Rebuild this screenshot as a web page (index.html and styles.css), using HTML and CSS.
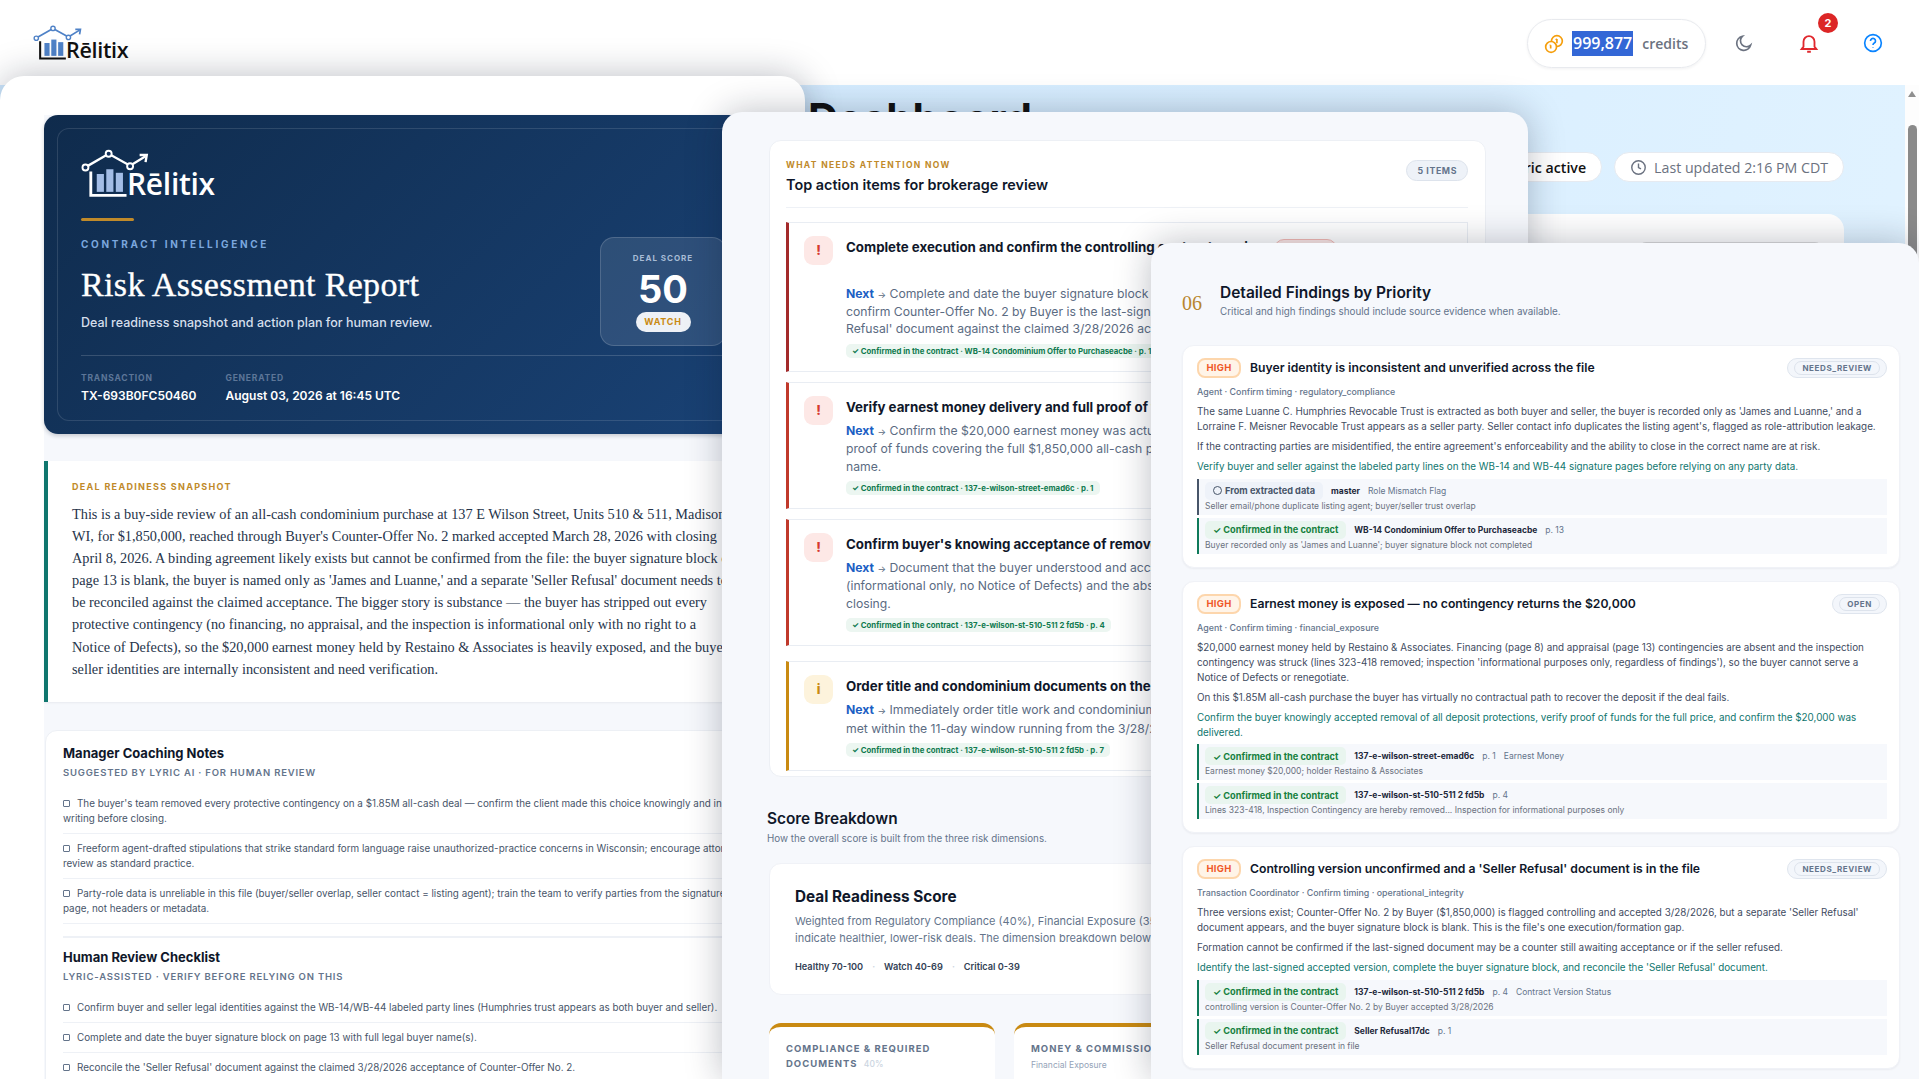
FILE: index.html
```html
<!DOCTYPE html>
<html lang="en">
<head>
<meta charset="utf-8">
<title>Relitix Dashboard</title>
<link rel="stylesheet" href="styles.css">
</head>
<body>
<div class="app">
  <header class="topbar">
    <div class="brand">
      <svg class="brand-mark" viewBox="0 0 60 42" aria-hidden="true">
        <path class="roof" d="M4 15 L23 4 L41 14 L54 6"/>
        <path class="roof" d="M49 5 L55 5 L54 11"/>
        <circle class="node" cx="3.5" cy="15.5" r="2.5"/>
        <circle class="node" cx="23" cy="4" r="2.5"/>
        <circle class="node" cx="41" cy="14.5" r="2.5"/>
        <rect class="bar" x="13" y="21" width="6" height="15"/>
        <rect class="bar" x="21" y="17" width="6" height="19"/>
        <rect class="bar" x="29" y="20" width="6" height="16"/>
        <path class="base" d="M8 19 V39 H38"/>
      </svg>
      <span class="brand-name">Rēlitix</span>
    </div>
    <div class="top-actions">
      <div class="credits">
        <svg class="icon-coins" viewBox="0 0 24 24" aria-hidden="true">
          <circle cx="15.5" cy="8.5" r="6.5"/><circle cx="8.5" cy="15.5" r="6.5"/>
          <path d="M15.5 6v5M14 7l1.5-1M8 13.5v4M7 14l1-.8"/>
        </svg>
        <span class="credits-num">999,877</span>
        <span class="credits-label">credits</span>
      </div>
      <svg class="icon-moon" viewBox="0 0 24 24" aria-hidden="true"><path d="M20 14.5A8.5 8.5 0 1 1 10 4a7 7 0 0 0 10 10.500z"/></svg>
      <div class="bell-wrap">
        <svg class="icon-bell" viewBox="0 0 24 24" aria-hidden="true"><path d="M6 16V10.500a6 6 0 0 1 12 0V16l2 2.500H4zM10 21.500h4"/></svg>
        <span class="bell-badge">2</span>
      </div>
      <svg class="icon-help" viewBox="0 0 24 24" aria-hidden="true"><circle cx="12" cy="12" r="10"/><path d="M9 9.500a3 3 0 1 1 4.500 2.600c-1 .6-1.500 1.200-1.500 2.400M12 17.500v.5"/></svg>
    </div>
  </header>
  <div class="workspace">
    <main class="dash">
      <h1 class="dash-title">Dashboard</h1>
      <div class="dash-pills">
        <span class="dash-pill dash-pill-strong">1 metric active</span>
        <span class="dash-pill">
          <svg class="icon-clock" viewBox="0 0 24 24" aria-hidden="true"><circle cx="12" cy="12" r="9.500"/><path d="M12 6.500V12l3.500 2"/></svg>
          Last updated 2:16 PM CDT
        </span>
      </div>
      <section class="dash-card"><div class="dash-card-inner"></div></section>
    </main>
    <div class="scrollbar"><span class="scroll-arrow"></span><span class="scroll-thumb"></span></div>
  </div>
</div>

<section class="window window-report">
  <div class="report">
    <div class="hero">
      <div class="hero-frame">
        <div class="hero-top">
          <div class="hero-main">
            <div class="brand brand-hero">
              <svg class="brand-mark" viewBox="0 0 60 42" aria-hidden="true">
                <path class="roof" d="M4 15 L23 4 L41 14 L54 6"/>
                <path class="roof" d="M49 5 L55 5 L54 11"/>
                <circle class="node" cx="3.5" cy="15.5" r="2.5"/>
                <circle class="node" cx="23" cy="4" r="2.5"/>
                <circle class="node" cx="41" cy="14.5" r="2.5"/>
                <rect class="bar" x="13" y="21" width="6" height="15"/>
                <rect class="bar" x="21" y="17" width="6" height="19"/>
                <rect class="bar" x="29" y="20" width="6" height="16"/>
                <path class="base" d="M8 19 V39 H38"/>
              </svg>
              <span class="brand-name">Rēlitix</span>
            </div>
            <div class="hero-rule"></div>
            <div class="hero-eyebrow">CONTRACT INTELLIGENCE</div>
            <h2 class="hero-title">Risk Assessment Report</h2>
            <p class="hero-sub">Deal readiness snapshot and action plan for human review.</p>
          </div>
          <div class="score-box">
            <div class="score-label">DEAL SCORE</div>
            <div class="score-num">50</div>
            <div class="score-pill">WATCH</div>
          </div>
        </div>
        <div class="hero-meta">
          <div><div class="meta-label">TRANSACTION</div><div class="meta-value">TX-693B0FC50460</div></div>
          <div><div class="meta-label">GENERATED</div><div class="meta-value">August 03, 2026 at 16:45 UTC</div></div>
        </div>
      </div>
    </div>

    <section class="snapshot">
      <div class="snapshot-label">DEAL READINESS SNAPSHOT</div>
      <p class="snapshot-text">This is a buy-side review of an all-cash condominium purchase at 137 E Wilson Street, Units 510 &amp; 511, Madison,<br>WI, for $1,850,000, reached through Buyer's Counter-Offer No. 2 marked accepted March 28, 2026 with closing<br>April 8, 2026. A binding agreement likely exists but cannot be confirmed from the file: the buyer signature block on<br>page 13 is blank, the buyer is named only as 'James and Luanne,' and a separate 'Seller Refusal' document needs to<br>be reconciled against the claimed acceptance. The bigger story is substance — the buyer has stripped out every<br>protective contingency (no financing, no appraisal, and the inspection is informational only with no right to a<br>Notice of Defects), so the $20,000 earnest money held by Restaino &amp; Associates is heavily exposed, and the buyer and<br>seller identities are internally inconsistent and need verification.</p>
    </section>

    <section class="notes">
      <h3 class="notes-title">Manager Coaching Notes</h3>
      <div class="notes-sub">SUGGESTED BY LYRIC AI · FOR HUMAN REVIEW</div>
      <ul class="notes-list">
        <li class="note"><span class="check"></span>The buyer's team removed every protective contingency on a $1.85M all-cash deal — confirm the client made this choice knowingly and in<br>writing before closing.</li>
        <li class="note"><span class="check"></span>Freeform agent-drafted stipulations that strike standard form language raise unauthorized-practice concerns in Wisconsin; encourage attorney<br>review as standard practice.</li>
        <li class="note"><span class="check"></span>Party-role data is unreliable in this file (buyer/seller overlap, seller contact = listing agent); train the team to verify parties from the signature<br>page, not headers or metadata.</li>
      </ul>
      <div class="notes-split">
        <h3 class="notes-title">Human Review Checklist</h3>
        <div class="notes-sub">LYRIC-ASSISTED · VERIFY BEFORE RELYING ON THIS</div>
        <ul class="notes-list">
          <li class="note"><span class="check"></span>Confirm buyer and seller legal identities against the WB-14/WB-44 labeled party lines (Humphries trust appears as both buyer and seller).</li>
          <li class="note"><span class="check"></span>Complete and date the buyer signature block on page 13 with full legal buyer name(s).</li>
          <li class="note"><span class="check"></span>Reconcile the 'Seller Refusal' document against the claimed 3/28/2026 acceptance of Counter-Offer No. 2.</li>
        </ul>
      </div>
    </section>
  </div>
</section>

<section class="window window-actions">
  <div class="actions-card">
    <div class="actions-head">
      <div>
        <div class="actions-eyebrow">WHAT NEEDS ATTENTION NOW</div>
        <h3 class="actions-title">Top action items for brokerage review</h3>
      </div>
      <span class="items-badge">5 ITEMS</span>
    </div>
    <div class="action-list">
      <article class="action action-dark">
        <span class="action-icon">!</span>
        <div class="action-body">
          <h4 class="action-title action-title-tall">Complete execution and confirm the controlling contract version <span class="crit">CRITICAL</span></h4>
          <p class="action-text"><b class="next">Next</b> <span class="arrow">→</span> Complete and date the buyer signature block on page 13 with full names and<br>confirm Counter-Offer No. 2 by Buyer is the last-signed and accepted version; reconcile the 'Seller<br>Refusal' document against the claimed 3/28/2026 acceptance.</p>
          <span class="source">✓ Confirmed in the contract · WB-14 Condominium Offer to Purchaseacbe · p. 13</span>
        </div>
      </article>
      <article class="action action-red">
        <span class="action-icon">!</span>
        <div class="action-body">
          <h4 class="action-title">Verify earnest money delivery and full proof of funds</h4>
          <p class="action-text"><b class="next">Next</b> <span class="arrow">→</span> Confirm the $20,000 earnest money was actually delivered and obtain<br>proof of funds covering the full $1,850,000 all-cash price in the correct buyer<br>name.</p>
          <span class="source">✓ Confirmed in the contract · 137-e-wilson-street-emad6c · p. 1</span>
        </div>
      </article>
      <article class="action action-red">
        <span class="action-icon">!</span>
        <div class="action-body">
          <h4 class="action-title">Confirm buyer's knowing acceptance of removed contingencies</h4>
          <p class="action-text"><b class="next">Next</b> <span class="arrow">→</span> Document that the buyer understood and accepted the inspection terms<br>(informational only, no Notice of Defects) and the absence of contingencies before<br>closing.</p>
          <span class="source">✓ Confirmed in the contract · 137-e-wilson-st-510-511 2 fd5b · p. 4</span>
        </div>
      </article>
      <article class="action action-amber">
        <span class="action-icon">i</span>
        <div class="action-body">
          <h4 class="action-title">Order title and condominium documents on the timeline</h4>
          <p class="action-text"><b class="next">Next</b> <span class="arrow">→</span> Immediately order title work and condominium documents so deadlines are<br>met within the 11-day window running from the 3/28/2026 acceptance.</p>
          <span class="source">✓ Confirmed in the contract · 137-e-wilson-st-510-511 2 fd5b · p. 7</span>
        </div>
      </article>
    </div>
  </div>

  <h3 class="breakdown-title">Score Breakdown</h3>
  <p class="breakdown-sub">How the overall score is built from the three risk dimensions.</p>
  <div class="readiness">
    <h4 class="readiness-title">Deal Readiness Score</h4>
    <p class="readiness-text">Weighted from Regulatory Compliance (40%), Financial Exposure (35%) and Operational Integrity. Higher scores<br>indicate healthier, lower-risk deals. The dimension breakdown below shows the detail.</p>
    <div class="legend"><span>Healthy 70-100</span><i>·</i><span>Watch 40-69</span><i>·</i><span>Critical 0-39</span></div>
  </div>
  <div class="dimensions">
    <div class="dimension"><div class="dimension-name">COMPLIANCE &amp; REQUIRED DOCUMENTS <small>40%</small></div></div>
    <div class="dimension"><div class="dimension-name">MONEY &amp; COMMISSIONS</div><div class="dimension-sub">Financial Exposure</div></div>
    <div class="dimension"><div class="dimension-name">OPERATIONS</div></div>
  </div>
</section>

<section class="window window-findings">
  <div class="findings-head">
    <span class="findings-num">06</span>
    <div>
      <h3 class="findings-title">Detailed Findings by Priority</h3>
      <p class="findings-sub">Critical and high findings should include source evidence when available.</p>
    </div>
  </div>
  <div class="finding-list">
    <article class="finding">
      <div class="finding-head"><span class="high">HIGH</span><h4 class="finding-title">Buyer identity is inconsistent and unverified across the file</h4><span class="status"><span class="status-in">NEEDS_REVIEW</span></span></div>
      <div class="finding-meta">Agent · Confirm timing · regulatory_compliance</div>
      <p class="finding-text">The same Luanne C. Humphries Revocable Trust is extracted as both buyer and seller, the buyer is recorded only as 'James and Luanne,' and a<br>Lorraine F. Meisner Revocable Trust appears as a seller party. Seller contact info duplicates the listing agent's, flagged as role-attribution leakage.</p>
      <p class="finding-text">If the contracting parties are misidentified, the entire agreement's enforceability and the ability to close in the correct name are at risk.</p>
      <p class="finding-text finding-fix">Verify buyer and seller against the labeled party lines on the WB-14 and WB-44 signature pages before relying on any party data.</p>
      <div class="evidence evidence-data">
        <div class="ev-row"><span class="chip chip-data"><span class="ring"></span>From extracted data</span><b class="ev-doc">master</b><span class="ev-note">Role Mismatch Flag</span></div>
        <div class="ev-sub">Seller email/phone duplicate listing agent; buyer/seller trust overlap</div>
      </div>
      <div class="evidence">
        <div class="ev-row"><span class="chip">✓ Confirmed in the contract</span><b class="ev-doc">WB-14 Condominium Offer to Purchaseacbe</b><span class="ev-note">p. 13</span></div>
        <div class="ev-sub">Buyer recorded only as 'James and Luanne'; buyer signature block not completed</div>
      </div>
    </article>
    <article class="finding">
      <div class="finding-head"><span class="high">HIGH</span><h4 class="finding-title">Earnest money is exposed — no contingency returns the $20,000</h4><span class="status"><span class="status-in">OPEN</span></span></div>
      <div class="finding-meta">Agent · Confirm timing · financial_exposure</div>
      <p class="finding-text">$20,000 earnest money held by Restaino &amp; Associates. Financing (page 8) and appraisal (page 13) contingencies are absent and the inspection<br>contingency was struck (lines 323-418 removed; inspection 'informational purposes only, regardless of findings'), so the buyer cannot serve a<br>Notice of Defects or renegotiate.</p>
      <p class="finding-text">On this $1.85M all-cash purchase the buyer has virtually no contractual path to recover the deposit if the deal fails.</p>
      <p class="finding-text finding-fix">Confirm the buyer knowingly accepted removal of all deposit protections, verify proof of funds for the full price, and confirm the $20,000 was<br>delivered.</p>
      <div class="evidence">
        <div class="ev-row"><span class="chip">✓ Confirmed in the contract</span><b class="ev-doc">137-e-wilson-street-emad6c</b><span class="ev-note">p. 1</span><span class="ev-note">Earnest Money</span></div>
        <div class="ev-sub">Earnest money $20,000; holder Restaino &amp; Associates</div>
      </div>
      <div class="evidence">
        <div class="ev-row"><span class="chip">✓ Confirmed in the contract</span><b class="ev-doc">137-e-wilson-st-510-511 2 fd5b</b><span class="ev-note">p. 4</span></div>
        <div class="ev-sub">Lines 323-418, Inspection Contingency are hereby removed... Inspection for informational purposes only</div>
      </div>
    </article>
    <article class="finding">
      <div class="finding-head"><span class="high">HIGH</span><h4 class="finding-title">Controlling version unconfirmed and a 'Seller Refusal' document is in the file</h4><span class="status"><span class="status-in">NEEDS_REVIEW</span></span></div>
      <div class="finding-meta">Transaction Coordinator · Confirm timing · operational_integrity</div>
      <p class="finding-text">Three versions exist; Counter-Offer No. 2 by Buyer ($1,850,000) is flagged controlling and accepted 3/28/2026, but a separate 'Seller Refusal'<br>document appears, and the buyer signature block is blank. This is the file's one execution/formation gap.</p>
      <p class="finding-text">Formation cannot be confirmed if the last-signed document may be a counter still awaiting acceptance or if the seller refused.</p>
      <p class="finding-text finding-fix">Identify the last-signed accepted version, complete the buyer signature block, and reconcile the 'Seller Refusal' document.</p>
      <div class="evidence">
        <div class="ev-row"><span class="chip">✓ Confirmed in the contract</span><b class="ev-doc">137-e-wilson-st-510-511 2 fd5b</b><span class="ev-note">p. 4</span><span class="ev-note">Contract Version Status</span></div>
        <div class="ev-sub">controlling version is Counter-Offer No. 2 by Buyer accepted 3/28/2026</div>
      </div>
      <div class="evidence">
        <div class="ev-row"><span class="chip">✓ Confirmed in the contract</span><b class="ev-doc">Seller Refusal17dc</b><span class="ev-note">p. 1</span></div>
        <div class="ev-sub">Seller Refusal document present in file</div>
      </div>
    </article>
  </div>
</section>
</body>
</html>
```
FILE: styles.css
```css
* { box-sizing: border-box; }
html, body { margin: 0; height: 100%; overflow: hidden; }
body { position: relative; width: 1919px; height: 1079px; font-family: Inter, "Liberation Sans", sans-serif; color: #0f172a; background: #fff; }
h1, h2, h3, h4, p, ul { margin: 0; padding: 0; }
ul { list-style: none; }

/* app behind the windows */
.app { display: flex; flex-direction: column; height: 1079px; }
.topbar { height: 85px; flex: none; display: flex; justify-content: space-between; padding: 25px 0 0 33px; background: #fff; box-shadow: 0 1px 4px rgba(15, 23, 42, .12); }
.brand { display: flex; align-items: flex-end; width: 94px; height: 36px; color: #111; }
.brand-mark { width: 52px; height: 36px; flex: none; }
.roof { fill: none; stroke: #4f82c7; stroke-width: 2; }
.node { fill: #fff; stroke: #4f82c7; stroke-width: 1.600; }
.bar { fill: #4f82c7; }
.base { fill: none; stroke: #111; stroke-width: 2.400; }
.brand-name { font-family: "Open Sans", sans-serif; font-size: 21.500px; line-height: 23px; font-weight: 600; letter-spacing: -.3px; margin-left: -19px; }
.top-actions { display: flex; align-items: center; height: 36px; padding-right: 36px; }
.credits { display: flex; align-items: center; width: 179px; height: 49px; margin-top: 1px; padding-left: 16px; border: 1px solid #e8eaee; border-radius: 25px; box-shadow: 0 1px 3px rgba(15, 23, 42, .06); font-family: "Open Sans", sans-serif; }
.icon-coins { width: 20px; height: 20px; fill: #fff; stroke: #f59e0b; stroke-width: 2; }
.credits-num { margin-left: 8px; background: #3367d6; color: #fff; font-size: 16px; font-weight: 600; line-height: 25px; padding: 0 1px; }
.credits-label { margin-left: 9px; color: #6b7280; font-size: 14px; font-weight: 600; }
.icon-moon { width: 20px; height: 20px; margin-left: 28px; fill: none; stroke: #6b7280; stroke-width: 2; }
.bell-wrap { position: relative; width: 20px; height: 22px; margin-left: 44px; }
.icon-bell { width: 22px; height: 22px; fill: none; stroke: #e0282e; stroke-width: 2; }
.bell-badge { position: absolute; left: 20px; top: -19px; width: 20px; height: 20px; border-radius: 50%; background: #dc2626; color: #fff; font-size: 11px; font-weight: 700; line-height: 20px; text-align: center; }
.icon-help { width: 20px; height: 20px; margin-left: 45px; fill: none; stroke: #0a84ff; stroke-width: 2; }

.workspace { flex: 1; display: flex; min-height: 0; }
.dash { flex: 1; padding: 10px 61px 0 808px; background: linear-gradient(100deg, #cfe9ff 0%, #d8eeff 60%, #e2f3ff 100%); font-family: "Open Sans", sans-serif; }
.dash-title { font-family: Inter, sans-serif; font-size: 42px; line-height: 48px; font-weight: 700; color: #111; }
.dash-pills { display: flex; justify-content: flex-end; gap: 12px; margin-top: 9px; }
.dash-pill { display: flex; align-items: center; gap: 7px; height: 30px; padding: 0 15px; border: 1px solid #e6eaf0; border-radius: 15px; background: #fff; color: #6b7280; font-size: 14.200px; }
.dash-pill-strong { color: #111; font-weight: 600; }
.icon-clock { width: 17px; height: 17px; fill: none; stroke: #6b7280; stroke-width: 2; }
.dash-card { height: 300px; margin-top: 32px; padding: 28px 21px 0 0; border-radius: 16px; background: #fff; }
.dash-card-inner { width: 185px; height: 40px; margin-left: auto; border: 1px solid #ddd; border-radius: 8px; }
.scrollbar { width: 14px; flex: none; display: flex; flex-direction: column; align-items: center; background: #fdfdfd; }
.scroll-arrow { margin-top: 6px; border: 4px solid transparent; border-top: 0; border-bottom: 6px solid #8f8f8f; }
.scroll-thumb { width: 9px; height: 200px; margin-top: 28px; border-radius: 5px; background: #8a8a8a; }

/* windows on the desktop */
.window { position: absolute; overflow: hidden; box-shadow: 0 0 36px rgba(15, 23, 42, .28); }
.window-report { left: 0; top: 76px; width: 805px; height: 1003px; border-radius: 24px 24px 0 0; background: #fff; padding: 39px 0 0 44px; }
.window-actions { left: 722px; top: 112px; width: 806px; height: 967px; border-radius: 20px 20px 0 0; background: #f6f8fc; padding: 28px 42px 0 47px; }
.window-findings { left: 1151px; top: 243px; width: 768px; height: 836px; border-radius: 20px 20px 0 0; background: #f6f8fc; padding: 35px 19px 0 31px; }

/* report */
.report { background: #f6f8fc; height: 1000px; }
.hero { height: 319px; padding: 13px 0 0 13px; border-radius: 14px; background: linear-gradient(135deg, #0f2b4c 0%, #1a4377 100%); box-shadow: 0 2px 4px rgba(15, 23, 42, .2); color: #fff; }
.hero-frame { height: 293px; padding: 20px 0 0 23px; border: 1px solid rgba(255, 255, 255, .12); border-right: 0; border-radius: 12px 0 0 12px; }
.hero-top { display: flex; height: 207px; border-bottom: 1px solid rgba(255, 255, 255, .16); }
.hero-main { width: 519px; }
.brand-hero { width: 130px; height: 50px; color: #fff; }
.brand-hero .brand-mark { width: 72px; height: 50px; }
.brand-hero .roof { stroke: #fff; stroke-width: 2; }
.brand-hero .node { fill: #12305a; stroke: #fff; }
.brand-hero .bar { fill: #a3bde6; }
.brand-hero .base { stroke: #fff; }
.brand-hero .brand-name { font-size: 30px; line-height: 31px; margin-left: -26px; }
.hero-rule { width: 53px; height: 3px; margin-top: 19px; border-radius: 2px; background: #c08a2a; }
.hero-eyebrow { margin-top: 16px; font-size: 10px; line-height: 14px; font-weight: 700; letter-spacing: 2.700px; color: #7ba7de; }
.hero-title { margin-top: 14px; font-family: "Liberation Serif", serif; font-size: 34px; line-height: 40px; font-weight: 400; letter-spacing: .35px; -webkit-text-stroke: .35px #fff; }
.hero-sub { margin-top: 9px; font-size: 12.500px; line-height: 18px; font-weight: 500; color: #d5dfec; }
.score-box { align-self: flex-end; width: 126px; height: 109px; margin-bottom: 9px; padding-top: 14px; border: 1px solid rgba(255, 255, 255, .16); border-radius: 14px; background: rgba(255, 255, 255, .1); display: flex; flex-direction: column; align-items: center; }
.score-label { font-size: 8px; line-height: 12px; font-weight: 700; letter-spacing: 1px; color: #a8bcd6; }
.score-num { margin-top: 5px; font-size: 38px; line-height: 40px; font-weight: 700; }
.score-pill { width: 55px; height: 20px; margin-top: 3px; border-radius: 10px; background: #eef1f6; color: #c98a12; font-size: 9px; font-weight: 700; line-height: 20px; letter-spacing: .8px; text-align: center; }
.hero-meta { display: flex; gap: 29px; padding-top: 16px; }
.meta-label { font-size: 8.500px; line-height: 12px; font-weight: 700; letter-spacing: .8px; color: #5d7698; }
.meta-value { margin-top: 4px; font-size: 12px; line-height: 16px; font-weight: 600; }

.snapshot { height: 241px; margin-top: 27px; padding: 20px 0 0 24px; border-left: 4px solid #0f766e; background: #fff; box-shadow: 0 1px 2px rgba(15, 23, 42, .06); white-space: nowrap; }
.snapshot-label { font-size: 9px; line-height: 12px; font-weight: 700; letter-spacing: 1.300px; color: #c08a2a; }
.snapshot-text { margin-top: 10px; font-family: "Liberation Serif", serif; font-size: 14.300px; line-height: 22.100px; color: #26344a; }

.notes { height: 400px; margin: 28px 0 0 1px; padding: 13px 0 0 17px; border: 1px solid #edf0f5; border-radius: 12px; background: #fff; white-space: nowrap; }
.notes-title { font-size: 13px; line-height: 18px; font-weight: 700; color: #0f172a; }
.notes-sub { margin-top: 5px; font-size: 9.500px; line-height: 12px; font-weight: 600; letter-spacing: .8px; color: #64748b; }
.notes-list { margin-top: 10px; }
.note { padding: 7px 0; border-bottom: 1px solid #eef1f6; font-size: 9.850px; line-height: 15px; color: #475569; }
.check { display: inline-block; width: 7px; height: 7px; margin-right: 7px; border: 1px solid #64748b; border-radius: 1px; vertical-align: 0; }
.notes-split { margin-top: 12px; padding-top: 10px; border-top: 2px solid #eef1f6; }

/* actions */
.actions-card { height: 637px; padding: 0 17px 0 16px; border: 1px solid #edf0f5; border-radius: 12px; background: #fff; }
.actions-head { display: flex; justify-content: space-between; height: 67px; padding-top: 18px; border-bottom: 1px solid #eef1f6; }
.actions-eyebrow { font-size: 8.500px; line-height: 12px; font-weight: 700; letter-spacing: 1.350px; color: #c08a2a; }
.actions-title { margin-top: 5px; font-size: 14.400px; line-height: 18px; font-weight: 600; }
.items-badge { height: 21px; margin-top: 1px; padding: 0 10px; border: 1px solid #dde3ec; border-radius: 11px; background: #eef2f8; color: #64748b; font-size: 8.800px; font-weight: 700; line-height: 19px; letter-spacing: .6px; }
.action-list { display: flex; flex-direction: column; gap: 10px; margin-top: 14px; }
.action { display: flex; gap: 13px; padding: 12px 16px 13px 15px; border: 1px solid #e9edf3; border-left: 3px solid #c0392b; background: #fff; }
.action-dark { border-left-color: #a32a2a; }
.action-amber { margin-top: 5px; border-left-color: #c98a12; }
.action-icon { flex: none; width: 29px; height: 29px; margin-top: 1px; border-radius: 9px; background: #fde8e6; color: #d63a2f; font-size: 13px; font-weight: 800; line-height: 29px; text-align: center; }
.action-amber .action-icon { background: #fdf3dc; color: #c98a12; }
.action-body { min-width: 0; flex: 1; white-space: nowrap; }
.action-title { font-size: 13.300px; line-height: 24px; font-weight: 700; }
.action-title-tall { margin-bottom: 25.500px; }
.crit { display: inline-block; height: 20px; margin-left: 6px; padding: 0 10px; border: 1px solid #f3b9b3; border-radius: 10px; background: #fde8e6; color: #c0392b; font-size: 9px; line-height: 18px; }
.action-text { margin-top: 3px; font-size: 12.200px; line-height: 17.400px; color: #5b6b82; }
.next { color: #1d5fc4; font-weight: 700; }
.arrow { color: #5b6b82; font-size: 9px; }
.source { display: inline-block; height: 14px; margin-top: 5px; padding: 0 6px; border-radius: 5px; background: #ecf6f1; color: #0f7a4f; font-size: 7.800px; font-weight: 700; line-height: 14px; }

.breakdown-title { margin: 32px 0 0 -2px; font-size: 15.400px; line-height: 20px; font-weight: 600; }
.breakdown-sub { margin: 4px 0 0 -2px; font-size: 9.800px; line-height: 12px; color: #64748b; }
.readiness { height: 132px; margin-top: 18px; padding: 23px 0 0 25px; border: 1px solid #f0f2f7; border-radius: 12px; background: #fff; white-space: nowrap; overflow: hidden; }
.readiness-title { font-size: 15.300px; line-height: 20px; font-weight: 700; }
.readiness-text { margin-top: 6px; font-size: 11px; line-height: 17px; color: #64748b; }
.legend { display: flex; gap: 9px; margin-top: 13px; font-size: 9.200px; line-height: 14px; font-weight: 600; color: #334155; }
.legend i { color: #cbd5e1; font-style: normal; }
.dimensions { display: grid; grid-template-columns: repeat(3, 226px); gap: 19px; margin-top: 28px; }
.dimension { height: 100px; padding: 14px 17px 0; border-top: 4px solid #c98a12; border-radius: 12px 12px 0 0; background: #fff; }
.dimension-name { font-size: 9.500px; line-height: 15px; font-weight: 700; letter-spacing: 1px; color: #64748b; }
.dimension-name small { font-size: 8.500px; font-weight: 500; letter-spacing: 0; color: #cbd5e1; margin-left: 3px; }
.dimension-sub { margin-top: 3px; font-size: 8.500px; line-height: 12px; color: #94a3b8; }

/* findings */
.findings-head { display: flex; align-items: center; gap: 18px; height: 45px; }
.findings-num { margin-top: 5px; font-family: "Liberation Serif", serif; font-size: 20px; line-height: 24px; color: #b8862e; }
.findings-title { font-size: 15.500px; line-height: 20px; font-weight: 600; }
.findings-sub { margin-top: 2px; font-size: 9.850px; line-height: 13px; color: #64748b; }
.finding-list { display: flex; flex-direction: column; gap: 13px; margin-top: 22px; }
.finding { padding: 12px 12px 13px 14px; border: 1px solid #f0f2f7; border-radius: 12px; background: #fff; box-shadow: 0 1px 2px rgba(15, 23, 42, .05); }
.finding-head { display: flex; align-items: center; height: 20px; }
.high { width: 44px; height: 20px; border: 2px solid #fdd6ac; border-radius: 8px; background: #fff4e8; color: #ef5a2a; font-size: 9.500px; font-weight: 700; line-height: 16px; text-align: center; letter-spacing: .3px; }
.finding-title { margin-left: 9px; font-size: 12.200px; line-height: 20px; font-weight: 600; }
.status { margin-left: auto; padding: 2px 6px; height: 20px; border: 1px solid #dfe5ee; border-radius: 10px; background: #f3f6fb; }
.status-in { display: block; height: 14px; padding: 0 7px; border: 1px solid #dde3ec; border-radius: 7px; color: #64748b; font-size: 8px; font-weight: 700; line-height: 12px; letter-spacing: .6px; }
.finding-meta { margin-top: 8px; font-size: 8.850px; line-height: 12px; font-weight: 500; color: #64748b; }
.finding-text { margin-top: 5px; font-size: 9.850px; line-height: 15px; color: #3f4c5f; white-space: nowrap; }
.finding-meta + .finding-text { margin-top: 6px; }
.finding-fix { color: #0f766e; }
.evidence { height: 36px; margin-top: 3px; padding: 3px 0 0 6px; border-left: 2px solid #0f7a5a; background: #f6f8fc; }
.finding-fix + .evidence { margin-top: 4.500px; }
.evidence-data { border-left-color: #475569; }
.ev-row { display: flex; align-items: center; gap: 8px; height: 18px; }
.chip { display: flex; align-items: center; height: 18px; padding: 0 8px; border-radius: 5px; background: #e9f5ef; color: #15803d; font-size: 9.200px; font-weight: 700; }
.chip-data { gap: 2px; padding: 0 8px; background: #eef2f9; color: #475569; }
.ring { width: 9px; height: 9px; margin-right: 1px; border: 1px solid #475569; border-radius: 50%; }
.ev-doc { font-size: 8.500px; font-weight: 700; color: #1e293b; }
.ev-note { font-size: 8.500px; color: #64748b; }
.ev-sub { font-size: 8.500px; line-height: 12px; color: #6b7280; }
```
